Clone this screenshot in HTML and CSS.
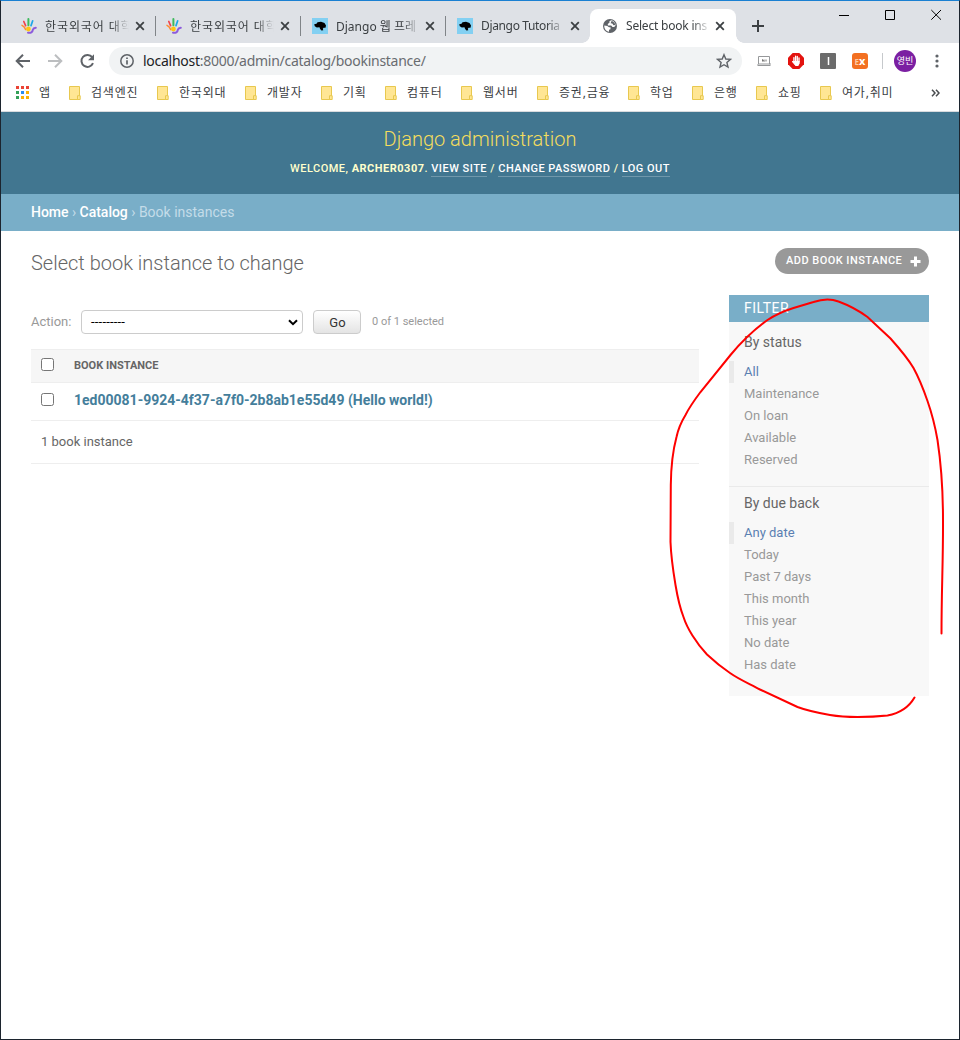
FILE: index.html
```html
<!DOCTYPE html>
<html lang="ko">
<head>
<meta charset="utf-8">
<title>Select book instance to change | Django site admin</title>
<link rel="stylesheet" href="styles.css">
</head>
<body>
<svg class="defs" width="0" height="0">
  <defs>
    <symbol id="hand" viewBox="0 0 16 16">
      <g fill="none" stroke-linecap="round" stroke-width="1.700">
        <path d="M2.800 3.500 L4.600 7.600" stroke="#f0444c"/>
        <path d="M7.400 1 V7.200" stroke="#3dba5c" stroke-width="2"/>
        <path d="M11.700 2.800 L10 7.600" stroke="#1da7e8"/>
        <path d="M1 7.400 Q3.600 8.600 4.600 11.600" stroke="#ff8a2e" stroke-width="1.500"/>
        <path d="M7 14.700 Q11.400 15.300 11.800 11.800 Q12.400 9.800 14.800 9.700" stroke="#8c5bdc" stroke-width="2"/>
      </g>
      <circle cx="7.400" cy="11" r="2.400" fill="#ffc414"/>
    </symbol>
    <symbol id="mdn" viewBox="0 0 16 16">
      <path fill="#83d0f2" d="M0 0h16v16H0z"/>
      <path d="M2.200 6.300 4.500 5.700 5.500 4.300 9 3.800 12.500 5 14 7.500 13.500 9.700 11.600 9.800 10.800 10.800 11.300 12.300 9.400 12.600 8 10.700 7.500 9.300 4.800 9.500 2.800 8.200z"/>
    </symbol>
    <symbol id="close" viewBox="0 0 10 10"><path d="m1.200 1.200 7.600 7.600m0-7.600-7.600 7.600" fill="none" stroke="#3c4043" stroke-width="1.800"/></symbol>
    <symbol id="folder" viewBox="0 0 14 15">
      <path d="M.5.5h10v13H.5z" fill="#ffe694" stroke="#e8c84f"/>
      <path d="M8.500 13.500V9.700h2.700v3.800z" fill="#ffe694" stroke="#e8c84f"/>
    </symbol>
  </defs>
</svg>
<div class="window">
  <div class="tabstrip">
    <div class="tab"><svg class="fav"><use href="#hand"/></svg><span class="tab-title">한국외국어 대학</span><svg class="x"><use href="#close"/></svg></div>
    <div class="tab"><svg class="fav"><use href="#hand"/></svg><span class="tab-title">한국외국어 대학</span><svg class="x"><use href="#close"/></svg></div>
    <div class="tab shift"><svg class="fav"><use href="#mdn"/></svg><span class="tab-title mixed">Django 웹 프레</span><svg class="x"><use href="#close"/></svg></div>
    <div class="tab last shift"><svg class="fav"><use href="#mdn"/></svg><span class="tab-title latin">Django Tutoria</span><svg class="x"><use href="#close"/></svg></div>
    <div class="tab active"><svg class="fav" viewBox="0 0 16 16"><circle cx="8" cy="8" r="7" fill="#5f6368"/><path d="M9.300 2.300C7.500 2.700 7 3.600 7.600 4.600L5.800 6v1.500h3.400L10.500 9l1.800-.1 1.300-1.600C13.600 4.800 11.500 2.700 9.300 2.300zM2.300 7.600l3 .4 1.700 1.300h1.500v2L7 11.700v2C4.200 13.400 2 11 2.300 7.600z" fill="#fff"/><path d="M9.700 2.700 12.500 4.700l.8 2.300-1.800.2-1.200-1.700-1.700-.2z" fill="#5f6368"/></svg><span class="tab-title latin">Select book ins</span><svg class="x"><use href="#close"/></svg></div>
    <svg class="newtab" viewBox="0 0 12 12"><path d="M6 0v12M0 6h12" stroke="#3c4043" stroke-width="2"/></svg>
    <svg class="winctl" viewBox="0 0 104 12"><g fill="none" stroke="#000"><path d="M0 6.500h10M46.500 1.500h9v9h-9zM92.300 1l9.700 9.700m0-9.700-9.700 9.700"/></g></svg>
  </div>
  <div class="toolbar">
    <svg class="nav" viewBox="0 0 84 16"><g fill="none" stroke-width="2"><path d="M15 8H2M8 1.700 1.700 8 8 14.300" stroke="#5f6368"/><path d="M33 8h13M40 1.700 46.300 8 40 14.300" stroke="#bcbec0"/><path d="M77.200 4.200A6 6 0 1 0 78 10.200" stroke="#5f6368"/></g><path d="M79 1.200v6h-6z" fill="#5f6368"/></svg>
    <div class="omnibox">
      <svg class="info" viewBox="0 0 16 16"><circle cx="8" cy="8" r="6.200" fill="none" stroke="#5f6368" stroke-width="1.500"/><path d="M8 7.200v4.200M8 4.500v1.500" stroke="#5f6368" stroke-width="1.700"/></svg>
      <span class="url"><b>localhost</b>:8000/admin/catalog/bookinstance/</span>
      <svg class="star" viewBox="0 0 16 16"><path d="m8 1.700 1.800 4.300 4.700.4-3.600 3.100 1.100 4.600L8 11.700 4 14.100l1.100-4.600L1.500 6.400 6.200 6z" fill="none" stroke="#5f6368" stroke-width="1.400"/></svg>
    </div>
    <svg class="ext ext-card" viewBox="0 0 16 16"><path d="M2.500 3.500h11v7.500h-11zM2 12.500h12M14 10v3M2 11v2" fill="none" stroke="#96989a"/><path d="M6.500 8.500V6.500l1.500 2v-2m2 0v2" fill="none" stroke="#777"/></svg>
    <svg class="ext" viewBox="0 0 16 16"><path d="M4.700 0h6.600L16 4.700v6.600L11.300 16H4.700L0 11.300V4.700z" fill="#e3130f"/><path d="M5.900 8.500V4.600M7.600 8V3.200M9.300 8V3.500M11 9V5M4.600 8.600l2.200 2.600" fill="none" stroke="#fff" stroke-width="1.300" stroke-linecap="round"/><path d="M5.300 8h6.300v2.500L10.300 13H7.300z" fill="#fff"/></svg>
    <svg class="ext" viewBox="0 0 16 16"><rect width="16" height="16" rx="1" fill="#6b6b6b"/><path d="M8.500 4v8" stroke="#fff" stroke-width="1.500"/></svg>
    <div class="ext exbadge"><i>E</i>x</div>
    <span class="divider"></span>
    <span class="avatar">영빈</span>
    <svg class="dots" viewBox="0 0 4 14"><g fill="#5f6368"><circle cx="2" cy="2" r="1.600"/><circle cx="2" cy="7" r="1.600"/><circle cx="2" cy="12" r="1.600"/></g></svg>
  </div>
  <div class="bookmarks">
    <div class="apps"><svg viewBox="0 0 13 13"><path d="M0 0h3v3H0zM5 0h3v3H5zM10 0h3v3h-3z" fill="#ea4335"/><path d="M0 5h3v3H0zM0 10h3v3H0z" fill="#34a058"/><path d="M5 5h3v3H5z" fill="#2a8cf0"/><path d="M10 5h3v3h-3zM5 10h3v3H5zM10 10h3v3h-3z" fill="#fbb005"/></svg>앱</div>
    <div class="bm w88"><svg><use href="#folder"/></svg>검색엔진</div>
    <div class="bm w88"><svg><use href="#folder"/></svg>한국외대</div>
    <div class="bm w76"><svg><use href="#folder"/></svg>개발자</div>
    <div class="bm w64"><svg><use href="#folder"/></svg>기획</div>
    <div class="bm w76"><svg><use href="#folder"/></svg>컴퓨터</div>
    <div class="bm w76"><svg><use href="#folder"/></svg>웹서버</div>
    <div class="bm w91"><svg><use href="#folder"/></svg>증권,금융</div>
    <div class="bm w64"><svg><use href="#folder"/></svg>학업</div>
    <div class="bm w64"><svg><use href="#folder"/></svg>은행</div>
    <div class="bm w64"><svg><use href="#folder"/></svg>쇼핑</div>
    <div class="bm w91"><svg><use href="#folder"/></svg>여가,취미</div>
    <svg class="more" viewBox="0 0 9 8"><path d="m1 .7 3 3.300-3 3.300M5 .7l3 3.300-3 3.300" fill="none" stroke="#4a4d50" stroke-width="1.500"/></svg>
  </div>
  <header class="header">
    <div class="site-name">Django administration</div>
    <div class="user-tools">Welcome, <strong>archer0307</strong>. <a>View site</a> / <a>Change password</a> / <a>Log out</a></div>
  </header>
  <nav class="breadcrumbs"><a>Home</a> › <a>Catalog</a> › Book instances</nav>
  <main class="content">
    <div class="title-row">
      <h1>Select book instance to change</h1>
      <a class="addlink">Add book instance<svg viewBox="0 0 11 11"><path d="M5.500.5v10M.5 5.500h10" stroke="#fff" stroke-width="3"/></svg></a>
    </div>
    <div class="columns">
      <section class="results">
        <div class="actions">
          <label>Action:</label>
          <div class="select"><span>---------</span><svg viewBox="0 0 10 7"><path d="m1 1.200 4 4 4-4" fill="none" stroke="#000" stroke-width="2"/></svg></div>
          <button>Go</button>
          <span class="counter">0 of 1 selected</span>
        </div>
        <div class="row head"><i class="check"></i><span>Book instance</span></div>
        <div class="row item"><i class="check"></i><a>1ed00081-9924-4f37-a7f0-2b8ab1e55d49 (Hello world!)</a></div>
        <div class="paginator">1 book instance</div>
      </section>
      <aside class="filter">
        <h2>Filter</h2>
        <h3>By status</h3>
        <ul class="first">
          <li class="selected">All</li><li>Maintenance</li><li>On loan</li><li>Available</li><li>Reserved</li>
        </ul>
        <h3>By due back</h3>
        <ul>
          <li class="selected">Any date</li><li>Today</li><li>Past 7 days</li><li>This month</li><li>This year</li><li>No date</li><li>Has date</li>
        </ul>
      </aside>
    </div>
  </main>
  <svg class="ink" viewBox="660 290 290 435"><path d="M941.500 633.500C941.500 590 943.200 560 943 520C943 495 942 470 937.500 440C934 420 931 411 927.500 401C923 388 919 378 913.500 368C907 357 899 348 890.500 338.500L867.500 317C858 310 848 305 838.500 301.500C831 298.500 822 299 813.500 302L793.500 308C784 311 775 315 767.500 320C755 329 743 340 730.500 355L700.500 392C693 402 689 408 685.500 415C680 424 678 430 676.500 437C673 450 671 466 670.800 485L670.500 542C671 556 673 570 675.500 585C678 600 680 608 683.500 617C687 628 696 643 707 654.500C715 662 721 667 730 673C740 680 750 684 760 689.500L797.500 707C808 711 819 713 830 715C839 716.500 848 717 857.500 717C868 717 878 716.500 887.500 715.500C901 713 909 707 914.500 697.500" fill="none" stroke="#ff0000" stroke-width="2" stroke-linecap="round"/></svg>
</div>
</body>
</html>
```
FILE: styles.css
```css
* { box-sizing: border-box; }
body { margin: 0; font-family: Roboto, "Noto Sans CJK KR", sans-serif; }
svg { display: block; flex: none; }
.defs { position: absolute; }
.window {
  position: relative; width: 960px; height: 1040px; overflow: hidden;
  background: #fff; border: 1px solid #1c242e; border-top-color: #1a80d2;
}

/* browser chrome */
.tabstrip, .toolbar, .bookmarks { display: flex; font-family: "Noto Sans", "Noto Sans CJK KR", sans-serif; color: #3c4043; }
.tabstrip { height: 42px; padding-left: 10px; background: #dee1e6; align-items: flex-end; }
.tab { position: relative; width: 145px; height: 34px; padding-left: 10px; display: flex; align-items: center; font-size: 12px; }
.tab:not(.last):not(.active)::after { content: ""; position: absolute; right: 0; top: 7px; width: 1px; height: 20px; background: #808488; }
.tab.shift { padding-left: 11px; }
.fav { width: 16px; height: 16px; margin-right: 8px; }
.tab-title { width: 90px; margin-top: -1px; white-space: nowrap; letter-spacing: .9px; -webkit-mask-image: linear-gradient(90deg, #000 66px, transparent 84px); mask-image: linear-gradient(90deg, #000 66px, transparent 84px); }
.shift .tab-title { width: 89px; }
.tab-title.mixed { letter-spacing: 0; }
.tab-title.latin { letter-spacing: -.35px; }
.active .tab-title.latin { width: 89px; letter-spacing: -.2px; }
.x { width: 10px; height: 10px; }
.tab.active { width: 146px; margin-left: -1px; background: #fff; border-radius: 8px 8px 0 0; padding-left: 12px; }
.tab.active::before, .tab.active::after { content: ""; position: absolute; bottom: 0; width: 8px; height: 8px; }
.tab.active::before { left: -8px; background: radial-gradient(circle at 0 0, transparent 7.500px, #fff 8px); }
.tab.active::after { right: -8px; background: radial-gradient(circle at 100% 0, transparent 7.500px, #fff 8px); }
.newtab { width: 12px; height: 12px; margin: 0 0 11px 16px; }
.winctl { width: 104px; height: 12px; margin: 0 16px 22px auto; }
.toolbar { height: 36px; align-items: center; }
.nav { width: 84px; height: 16px; margin-left: 14px; }
.omnibox { width: 633px; height: 28px; margin-left: 10px; padding: 0 10px; display: flex; align-items: center; background: #f1f3f4; border-radius: 14px; }
.info { width: 16px; height: 16px; margin-right: 8px; }
.url { flex: 1; margin-top: -1px; font-size: 14px; letter-spacing: -.27px; color: #696c70; }
.url b { font-weight: 400; color: #202124; }
.star { width: 16px; height: 16px; }
.ext { width: 16px; height: 16px; margin-left: 16px; }
.ext-card { margin-left: 14px; }
.exbadge { border-radius: 3px; background: #f37021; color: #fff; font: 700 11px/15px "Open Sans", sans-serif; text-align: center; }
.exbadge i { font-style: normal; font-size: 8px; color: #ffc9a0; }
.divider { width: 1px; height: 16px; margin-left: 14px; background: #c6c9cc; }
.avatar { width: 22px; height: 22px; margin-left: 11px; border-radius: 50%; background: #7b1fa2; color: #fff; font-size: 9px; line-height: 21px; text-align: center; }
.dots { width: 4px; height: 14px; margin-left: 19px; }
.bookmarks { height: 33px; padding-bottom: 6px; align-items: center; border-bottom: 1px solid #d9dbde; font-size: 12px; letter-spacing: .8px; white-space: nowrap; }
.apps { width: 68px; padding-left: 15px; display: flex; align-items: center; gap: 10px; }
.apps svg { width: 13px; height: 13px; }
.bm { display: flex; align-items: center; gap: 8px; }
.bm svg { width: 14px; height: 15px; margin-top: 2px; }
.w88 { width: 88px; } .w76 { width: 76px; } .w64 { width: 64px; } .w91 { width: 91px; }
.more { width: 9px; height: 8px; margin-left: 20px; margin-top: 2px; }

/* admin header */
.header { height: 82px; padding-top: 15px; background: #417690; color: #ffc; text-align: center; }
.site-name { font-size: 20px; font-weight: 300; line-height: 24px; color: #f5dd5d; }
.user-tools { margin-top: 11px; font-size: 11px; font-weight: 500; line-height: 14px; letter-spacing: .49px; text-transform: uppercase; }
.user-tools a { color: #fff; border-bottom: 1px solid rgba(255,255,255,.25); padding-bottom: 1px; }
.breadcrumbs { height: 37px; padding: 10px 30px; background: #79aec8; color: #c4dce8; font-size: 14px; line-height: 16px; }
.breadcrumbs a { color: #fff; font-weight: 500; letter-spacing: -.03px; }

.content { padding: 17px 30px 0; }
.title-row { height: 47px; display: flex; justify-content: space-between; align-items: flex-start; }
h1 { margin: 3px 0 0; font-size: 20px; line-height: 24px; font-weight: 300; color: #666; }
.addlink { display: flex; align-items: center; width: 154px; height: 26px; padding: 0 8px 0 11px; border-radius: 13px; background: #999; color: #fff; font-size: 11px; font-weight: 500; letter-spacing: .46px; text-transform: uppercase; justify-content: space-between; white-space: nowrap; line-height: 24px; }
.addlink svg { width: 11px; height: 11px; }
.columns { display: flex; gap: 30px; align-items: flex-start; }
.results { width: 668px; }
.actions { height: 54px; padding-top: 15px; display: flex; align-items: flex-start; line-height: 24px; color: #999; font-size: 13px; }
.actions label { width: 50px; }
.select { width: 222px; height: 24px; padding: 0 4px 0 9px; display: flex; align-items: center; justify-content: space-between; border: 1px solid #ccc; border-radius: 4px; color: #000; letter-spacing: .2px; }
.select svg { width: 10px; height: 7px; }
.actions button { width: 48px; height: 24px; margin-left: 10px; padding: 1px 0 0 1px; border: 1px solid #ccc; border-radius: 4px; background: linear-gradient(#fff, #e4e4e4); color: #333; font: 13px Roboto, sans-serif; }
.counter { margin-left: 11px; font-size: 11px; line-height: 23px; }
.row { display: flex; align-items: center; padding-left: 10px; border-bottom: 1px solid #eee; }
.check { width: 13px; height: 13px; margin: -2px 20px 0 0; border: 1px solid #767676; border-radius: 2.500px; background: #fff; }
.head { height: 34px; padding-bottom: 2px; border-top: 1px solid #eee; background: #f6f6f6; color: #666; font-size: 11px; font-weight: 700; text-transform: uppercase; }
.item { height: 38px; padding-bottom: 3px; color: #447e9b; font-size: 14px; font-weight: 700; }
.paginator { height: 43px; padding-left: 10px; border-bottom: 1px solid #eee; color: #666; font-size: 13px; line-height: 42px; }

.filter { width: 200px; height: 401px; background: #f8f8f8; }
.filter h2 { margin: 0 0 12px; height: 27px; padding-left: 15px; background: #79aec8; color: #fff; font-size: 14px; letter-spacing: .5px; line-height: 27px; font-weight: 400; text-transform: uppercase; }
.filter h3 { margin: 0 0 11px; padding-left: 15px; color: #666; font-size: 14px; line-height: 16px; font-weight: 400; }
.filter ul { margin: 0; padding: 0; list-style: none; }
.filter ul.first { height: 126px; margin-bottom: 8px; border-bottom: 1px solid #eaeaea; }
.filter li { height: 22px; padding-left: 15px; color: #999; font-size: 13px; line-height: 22px; }
.filter li.selected { padding-left: 10px; border-left: 5px solid #eaeaea; color: #5b80b2; }

/* freehand loop drawn over the page */
.ink { position: absolute; left: 659px; top: 289px; width: 290px; height: 435px; }
```
